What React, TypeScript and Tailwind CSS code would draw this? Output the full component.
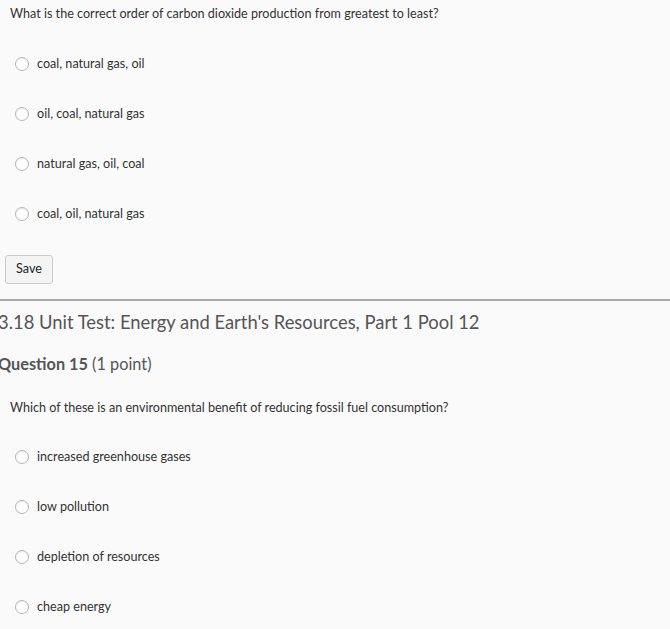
const q1 = ["coal, natural gas, oil", "oil, coal, natural gas", "natural gas, oil, coal", "coal, oil, natural gas"];
const q2 = ["increased greenhouse gases", "low pollution", "depletion of resources", "cheap energy"];

function Option({ label }: { label: string }) {
  return (
    <label className="flex items-center h-[50px] pl-[15px]">
      <span className="w-[14px] h-[14px] rounded-full border border-[#b5b5b5] bg-white shadow-[inset_0_1px_1px_rgba(0,0,0,0.08)]" />
      <span className="ml-[8px] text-[12.6px] text-[#333]">{label}</span>
    </label>
  );
}

export default function App() {
  return (
    <div className="w-[670px] h-[629px] overflow-hidden bg-[#fafafa] font-['Lato',sans-serif] text-[#333]">
      <p className="pt-[6px] pl-[10px] text-[12.6px] leading-[16px]">
        What is the correct order of carbon dioxide production from greatest to least?
      </p>
      <div className="mt-[17px]">
        {q1.map((o) => (
          <Option key={o} label={o} />
        ))}
      </div>
      <div className="pl-[5px] mt-[16px]">
        <button className="w-[48px] h-[29px] rounded-[3px] border border-[#ccc] bg-[#f4f4f4] text-[12.6px] text-[#222]">
          Save
        </button>
      </div>
      <hr className="mt-[15px] border-0 border-t-2 border-[#aaa]" />
      <h2 className="ml-[-2px] mt-[9px] text-[18.4px] leading-[24px] text-[#555]">
        3.18 Unit Test: Energy and Earth's Resources, Part 1 Pool 12
      </h2>
      <h3 className="ml-[-2px] mt-[19px] text-[16.3px] leading-[22px] text-[#555]">
        <span className="font-bold">Question 15</span> (1 point)
      </h3>
      <p className="mt-[25px] pl-[10px] text-[12.6px] leading-[16px]">
        Which of these is an environmental benefit of reducing fossil fuel consumption?
      </p>
      <div className="mt-[16px]">
        {q2.map((o) => (
          <Option key={o} label={o} />
        ))}
      </div>
    </div>
  );
}
